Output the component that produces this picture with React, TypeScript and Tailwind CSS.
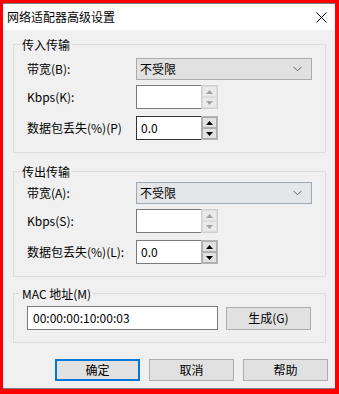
import React from "react";

const font = { fontFamily: '"Noto Sans CJK SC", "Noto Sans", sans-serif' };

function Chevron() {
  return (
    <svg width="9" height="6" viewBox="0 0 9 6" className="block">
      <path d="M0.5 0.8 L4.5 4.8 L8.5 0.8" fill="none" stroke="#606060" strokeWidth="1" />
    </svg>
  );
}

function Select({ blue }: { blue?: boolean }) {
  return (
    <div
      className={
        "w-[176px] h-[22px] border flex items-center justify-between pl-[3px] pr-[9px] text-[12px] leading-none text-black " +
        (blue ? "border-[#9ca9b5] bg-[#e4e6e8]" : "border-[#adadad] bg-[#e1e1e1]")
      }
    >
      <span>不受限</span>
      <Chevron />
    </div>
  );
}

function Arrow({ up, color }: { up?: boolean; color: string }) {
  return (
    <svg width="7" height="4" viewBox="0 0 7 4" className="block">
      {up ? (
        <path d="M0 4 L3.5 0 L7 4 Z" fill={color} />
      ) : (
        <path d="M0 0 L3.5 4 L7 0 Z" fill={color} />
      )}
    </svg>
  );
}

function Spin({ value, enabled, dark }: { value?: string; enabled?: boolean; dark?: boolean }) {
  const btn = enabled
    ? "border-[#adadad] bg-[#e1e1e1]"
    : "border-[#dcdcdc] bg-[#eaeaea]";
  const arrow = enabled ? "#000000" : "#a3a3a3";
  return (
    <div className="flex h-[24px]">
      <div
        className={
          "w-[65px] h-full bg-white border-y border-l flex items-center pl-[4px] text-[12px] leading-none text-black " +
          (dark ? "border-[#333333]" : "border-[#7a7a7a]")
        }
      >
        {value}
      </div>
      <div
        className={
          "w-[17px] h-full border flex flex-col bg-[#f0f0f0] " +
          (enabled ? "border-[#b4b4b4]" : "border-[#cfcfcf]")
        }
      >
        <div className={"flex-1 border flex items-center justify-center " + btn}>
          <Arrow up color={arrow} />
        </div>
        <div className={"flex-1 border flex items-center justify-center " + btn}>
          <Arrow color={arrow} />
        </div>
      </div>
    </div>
  );
}

function Row({ label, children, className }: { label: string; children: React.ReactNode; className?: string }) {
  return (
    <div className={"flex items-center " + (className || "")}>
      <div className="w-[109px] text-[12px] leading-none text-black whitespace-nowrap">{label}</div>
      {children}
    </div>
  );
}

function Legend({ children }: { children: React.ReactNode }) {
  return <legend className="ml-[6px] px-[2px] text-[12px] leading-[17px] text-black">{children}</legend>;
}

export default function App() {
  return (
    <div className="w-[339px] h-[394px] bg-[#ff0000] pt-[3px] pl-[3px] pr-[4px] pb-[5px]" style={font}>
      <div className="h-full flex flex-col bg-[#f0f0f0] border-t border-b border-[#74847f]">
        <div className="h-[26px] bg-white flex items-center justify-between pl-[4px] pr-[8px] shrink-0">
          <span className="text-[12px] leading-none text-black">网络适配器高级设置</span>
          <svg width="11" height="11" viewBox="0 0 11 11" className="block">
            <path d="M0.5 0.5 L10.5 10.5 M10.5 0.5 L0.5 10.5" stroke="#000" strokeWidth="1" />
          </svg>
        </div>
        <div className="flex-1 flex flex-col pt-[6px]">
          <fieldset className="ml-[10px] w-[313px] border border-[#dcdcdc] pt-[5px] pb-[12px]">
            <Legend>传入传输</Legend>
            <div className="pl-[13px]">
              <Row label="带宽(B):">
                <Select />
              </Row>
              <Row label="Kbps(K):" className="mt-[5px]">
                <Spin />
              </Row>
              <Row label="数据包丢失(%)(P)" className="mt-[7px]">
                <Spin value="0.0" enabled dark />
              </Row>
            </div>
          </fieldset>

          <fieldset className="mt-[10px] ml-[10px] w-[313px] border border-[#dcdcdc] pt-[2px] pb-[12px]">
            <Legend>传出传输</Legend>
            <div className="pl-[13px]">
              <Row label="带宽(A):">
                <Select blue />
              </Row>
              <Row label="Kbps(S):" className="mt-[5px]">
                <Spin />
              </Row>
              <Row label="数据包丢失(%)(L):" className="mt-[7px]">
                <Spin value="0.0" enabled />
              </Row>
            </div>
          </fieldset>

          <fieldset className="mt-[8px] ml-[10px] w-[313px] border border-[#dcdcdc] pt-[4px] pb-[12px]">
            <Legend>MAC 地址(M)</Legend>
            <div className="pl-[13px] flex items-center gap-[8px]">
              <div className="w-[191px] h-[24px] bg-white border border-[#7a7a7a] flex items-center pl-[5px] text-[12px] leading-none text-black">
                00:00:00:10:00:03
              </div>
              <div className="w-[85px] h-[23px] bg-[#e1e1e1] border border-[#adadad] flex items-center justify-center text-[12px] leading-none text-black">
                生成(G)
              </div>
            </div>
          </fieldset>

          <div className="mt-[16px] ml-[52px] flex gap-[9px]">
            <div className="w-[85px] h-[22px] bg-[#e1e1e1] border-2 border-[#0078d7] flex items-center justify-center text-[12px] leading-none text-black">
              确定
            </div>
            <div className="w-[85px] h-[22px] bg-[#e1e1e1] border border-[#adadad] flex items-center justify-center text-[12px] leading-none text-black">
              取消
            </div>
            <div className="w-[85px] h-[22px] bg-[#e1e1e1] border border-[#adadad] flex items-center justify-center text-[12px] leading-none text-black">
              帮助
            </div>
          </div>
        </div>
      </div>
    </div>
  );
}
